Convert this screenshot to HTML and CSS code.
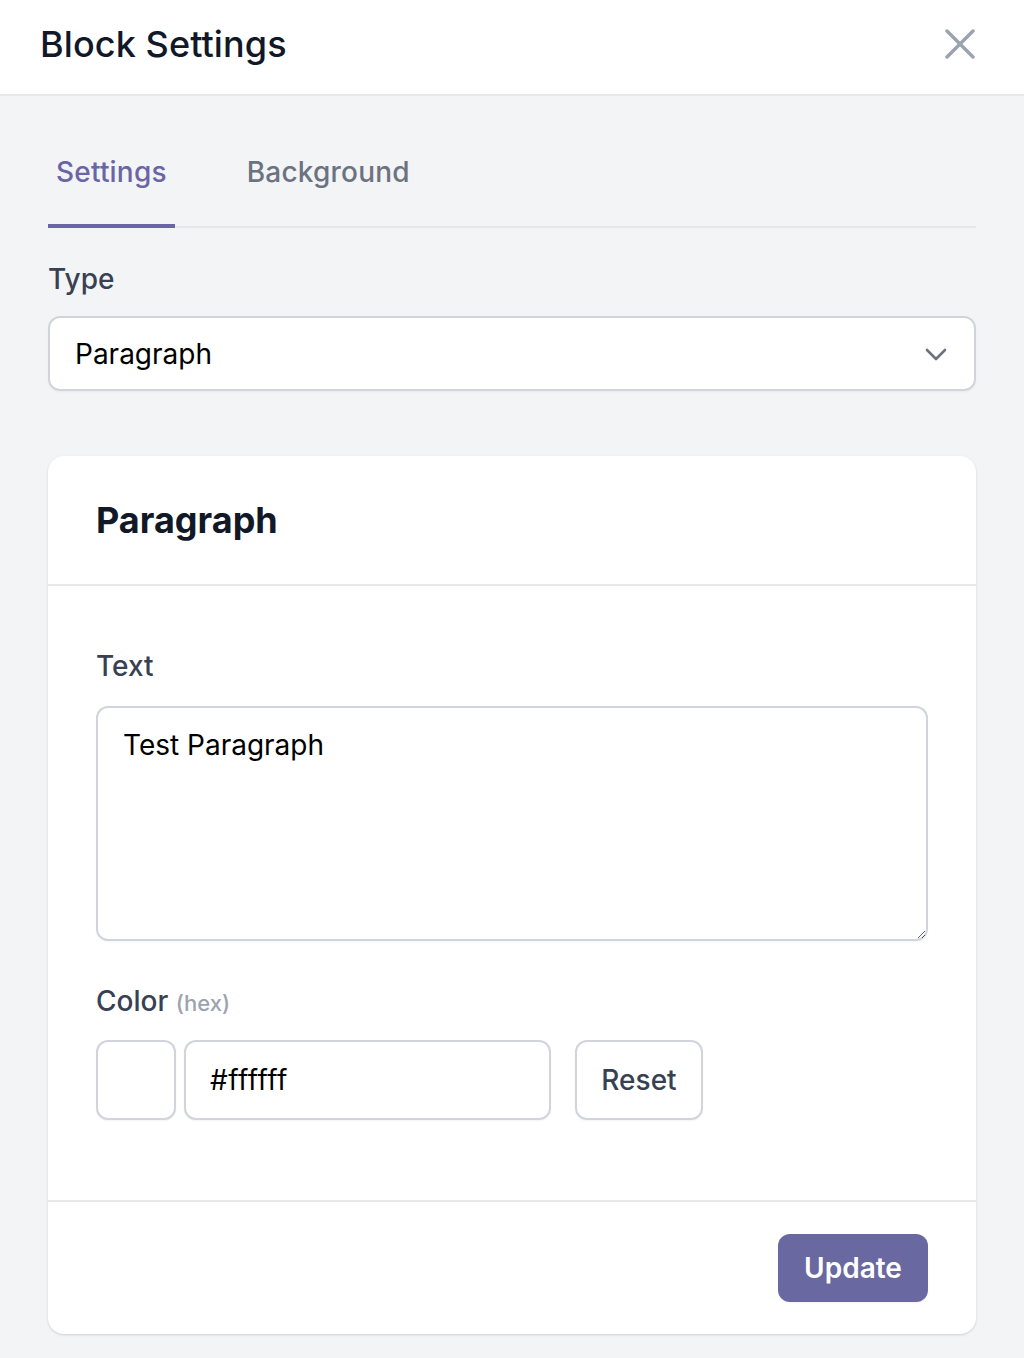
FILE: index.html
```html
<!DOCTYPE html>
<html lang="en">
<head>
<meta charset="utf-8">
<title>Block Settings</title>
<link rel="stylesheet" href="styles.css">
</head>
<body>
<div class="panel">
  <header class="panel-header">
    <h1 class="panel-title">Block Settings</h1>
    <button class="close-btn" aria-label="Close">
      <svg width="30" height="30" viewBox="0 0 30 30" fill="none" stroke="#9ca3af" stroke-width="3.4" stroke-linecap="round"><path d="M2 2L28 28M28 2L2 28"/></svg>
    </button>
  </header>
  <main class="panel-body">
    <nav class="tabs">
      <a class="tab tab-active">Settings</a>
      <a class="tab">Background</a>
    </nav>
    <label class="field-label type-label">Type</label>
    <div class="select">
      <span class="select-value">Paragraph</span>
      <svg class="chevron" width="22" height="14" viewBox="0 0 22 14" fill="none" stroke="#6b7280" stroke-width="2.6" stroke-linecap="round" stroke-linejoin="round"><path d="M2 2L11 11L20 2"/></svg>
    </div>
    <section class="card">
      <div class="card-header">
        <h2 class="card-title">Paragraph</h2>
      </div>
      <div class="card-body">
        <label class="field-label text-label">Text</label>
        <textarea class="textarea">Test Paragraph</textarea>
        <label class="field-label color-label">Color <span class="hint">(hex)</span></label>
        <div class="color-row">
          <div class="swatch"></div>
          <input class="hex-input" type="text" value="#ffffff">
          <button class="reset-btn">Reset</button>
        </div>
      </div>
      <div class="card-footer">
        <button class="update-btn">Update</button>
      </div>
    </section>
  </main>
</div>
</body>
</html>
```
FILE: styles.css
```css
* { box-sizing: border-box; }
html, body { margin: 0; padding: 0; }
body {
  background: #f3f4f6;
  font-family: Inter, "Liberation Sans", sans-serif;
  color: #111827;
}
.panel { min-height: 1358px; background: #f3f4f6; }
.panel-header {
  height: 96px;
  background: #ffffff;
  border-bottom: 2px solid #e5e7eb;
  display: flex;
  align-items: center;
  justify-content: space-between;
  padding: 0 49px 0 40px;
}
.panel-title {
  margin: 0 0 6px;
  font-size: 36px;
  font-weight: 500;
  color: #111827;
  line-height: 40px;
  letter-spacing: 0.1px;
}
.close-btn {
  border: 0;
  background: none;
  padding: 0;
  width: 30px;
  height: 30px;
  display: flex;
  margin-top: -7px;
}
.panel-body { padding: 0 48px; }
.tabs {
  display: flex;
  gap: 64px;
  padding-top: 56px;
  border-bottom: 2px solid #e5e7eb;
}
.tab {
  font-size: 28px;
  line-height: 40px;
  font-weight: 500;
  color: #6b7280;
  padding: 0 8px 32px;
  margin-bottom: -2px;
  border-bottom: 4px solid transparent;
  letter-spacing: 0.2px;
}
.tab-active { color: #6965a6; border-bottom-color: #6965a6; }
.field-label {
  display: block;
  font-size: 28px;
  line-height: 40px;
  font-weight: 500;
  color: #374151;
}
.type-label { margin-top: 31px; }
.select {
  margin-top: 17px;
  height: 75px;
  background: #fff;
  border: 2px solid #d1d5db;
  border-radius: 12px;
  display: flex;
  align-items: center;
  justify-content: space-between;
  padding: 0 27px 0 25px;
  box-shadow: 0 1px 2px rgba(0,0,0,0.04);
}
.select-value { font-size: 28px; color: #000; }
.chevron { margin-top: 2px; }
.card {
  margin-top: 65px;
  background: #fff;
  border-radius: 16px;
  box-shadow: 0 1px 3px rgba(0,0,0,0.1), 0 1px 2px rgba(0,0,0,0.06);
}
.card-header {
  padding: 44px 48px;
  border-bottom: 2px solid #e5e7eb;
}
.card-title {
  margin: 0;
  font-size: 36px;
  line-height: 40px;
  font-weight: 700;
  color: #111827;
}
.card-body { padding: 60px 48px 80px; }
.textarea {
  display: block;
  margin-top: 20px;
  width: 100%;
  height: 235px;
  border: 2px solid #d1d5db;
  border-radius: 12px;
  padding: 17px 25px;
  font-family: Inter, "Liberation Sans", sans-serif;
  font-size: 28px;
  line-height: 40px;
  color: #000;
  resize: vertical;
  box-shadow: 0 1px 2px rgba(0,0,0,0.04);
  outline: none;
}
.color-label { margin-top: 40px; }
.hint { font-size: 22px; color: #9ca3af; font-weight: 500; }
.color-row {
  margin-top: 17px;
  display: flex;
  align-items: center;
}
.swatch {
  width: 80px;
  height: 80px;
  background: #fff;
  border: 2px solid #d1d5db;
  border-radius: 12px;
  box-shadow: 0 1px 2px rgba(0,0,0,0.05);
}
.hex-input {
  margin-left: 8px;
  width: 367px;
  height: 80px;
  border: 2px solid #d1d5db;
  border-radius: 12px;
  padding: 0 24px;
  font-family: Inter, "Liberation Sans", sans-serif;
  font-size: 28px;
  letter-spacing: 0.5px;
  color: #000;
  box-shadow: 0 1px 2px rgba(0,0,0,0.05);
  outline: none;
}
.reset-btn {
  margin-left: 24px;
  width: 128px;
  height: 80px;
  background: #fff;
  border: 2px solid #d1d5db;
  border-radius: 12px;
  font-family: Inter, "Liberation Sans", sans-serif;
  font-size: 28px;
  font-weight: 500;
  color: #374151;
  box-shadow: 0 1px 2px rgba(0,0,0,0.05);
}
.card-footer {
  border-top: 2px solid #e5e7eb;
  padding: 32px 48px;
  display: flex;
  justify-content: flex-end;
}
.update-btn {
  width: 150px;
  height: 68px;
  background: #6a68a1;
  border: 0;
  border-radius: 12px;
  color: #fff;
  font-family: Inter, "Liberation Sans", sans-serif;
  font-size: 28px;
  font-weight: 600;
  box-shadow: 0 1px 2px rgba(0,0,0,0.05);
}
```
